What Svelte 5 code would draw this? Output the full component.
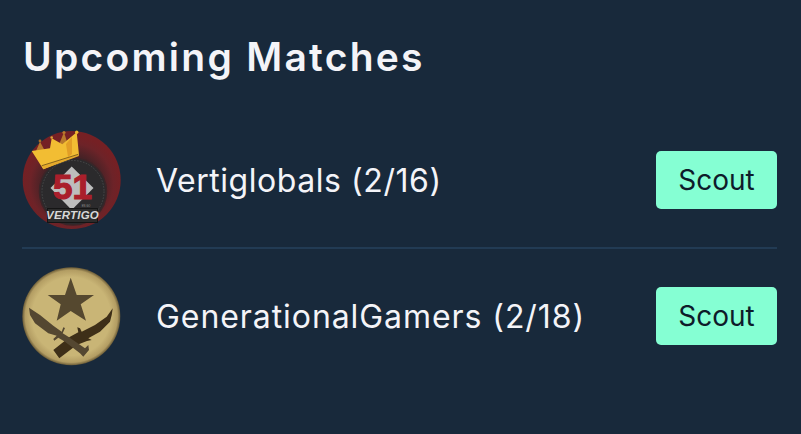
<script>
  const matches = [
    { name: 'Vertiglobals (2/16)', logo: 'vertigo', track: 0.55 },
    { name: 'GenerationalGamers (2/18)', logo: 'knives', track: 0.93 }
  ];
</script>

<main class="panel">
  <h1>Upcoming Matches</h1>
  <ul>
    {#each matches as m}
      <li>
        <div class="avatar">
          {#if m.logo === 'vertigo'}
            <svg viewBox="0 0 100 100" width="100" height="100">
              <defs>
                <radialGradient id="red" cx="50%" cy="55%" r="50%">
                  <stop offset="0.6" stop-color="#472226" />
                  <stop offset="0.85" stop-color="#6d2328" />
                  <stop offset="1" stop-color="#752024" />
                </radialGradient>
              </defs>
              <circle cx="49.700" cy="50" r="49" fill="url(#red)" />
              <circle cx="51" cy="61.500" r="33.500" fill="#2b2a2c" stroke="#3b2528" stroke-width="1.500" />
              <circle cx="51" cy="61.500" r="31" fill="none" stroke="#5a5a5a" stroke-width="0.6" stroke-dasharray="1.500 1.500" />
              <path d="M49.700 36.500 L71.500 58 L49.700 80 L28.500 58 Z" fill="#bdbdbd" />
              <text x="50.500" y="69" class="fifty">51</text>
              <text x="64" y="76.500" class="small">EN GO</text>
              <rect x="25.500" y="78.500" width="50" height="14" fill="#2c2c2c" stroke="#151515" stroke-width="1" />
              <text x="50.500" y="89.300" class="vertigo">VERTIGO</text>
              <path d="M14 21 L18 11.700 L23 21 Z" fill="#b9792c" />
              <path d="M36 17 L42 2.300 L46 15 Z" fill="#b9792c" />
              <path d="M9.700 21 L28 18.300 L29.700 8.300 L40.300 14.300 L54.700 2.300 L57 25 L21.300 39.300 Z" fill="#f2bd33" />
              <path d="M44 14 L50 7 L50 24 L46 27 Z" fill="#e29e26" />
              <path d="M19.700 35.700 L56.300 24.300 L57 26 L21.300 39.300 Z" fill="#e5aa2c" />
              <path d="M19.700 35.700 L56.300 24.300" stroke="#5a4114" stroke-width="0.7" fill="none" />
              <circle cx="18" cy="11" r="1.400" fill="#a96a2a" />
              <circle cx="29.700" cy="7.500" r="1.300" fill="#d9a33a" />
              <circle cx="42" cy="2.500" r="1.600" fill="#b9792c" />
              <circle cx="54.700" cy="2.300" r="1.700" fill="#efb72f" />
            </svg>
          {:else}
            <svg viewBox="0 0 100 100" width="100" height="100">
              <defs>
                <radialGradient id="gold" cx="50%" cy="50%" r="50%">
                  <stop offset="0.8" stop-color="#c9b576" />
                  <stop offset="0.94" stop-color="#b39d63" />
                  <stop offset="1" stop-color="#6a5b37" />
                </radialGradient>
              </defs>
              <circle cx="49.300" cy="50.300" r="49" fill="url(#gold)" />
              <path d="M48.700 11.700 L54.700 29 L72 29 L58.700 38.300 L64 54.700 L48.700 45 L34.700 54.700 L38.700 38.300 L25.700 29 L43 29 Z" fill="#55482f" />
              <path d="M90.700 42.300 Q90 50 88 55.700 L78 65.700 L66.300 72.300 L69.700 74 L65 75 L54.700 79 L37.300 92.300 L31.300 84 L48 70.700 L56.300 66.300 L55.300 61.300 L58 62.300 L59.700 65.700 L73 59 L84.700 50.700 Z" fill="#3e2f18" />
              <path d="M7 41.700 L18 49 L31.300 59.700 L39.700 65.700 L41.300 61.300 L43 62 L40.700 67.300 L46.300 70.700 L63 82.300 L66.300 79 L67 84 L61.300 90.700 L58 87.300 L43 75.700 L36.300 71.700 L32.300 74.700 L31.300 73 L34.700 69.700 L26.300 67.300 L13 57.300 L8 49 Z" fill="#544731" />
            </svg>
          {/if}
        </div>
        <span class="name" style="letter-spacing: {m.track}px">{m.name}</span>
        <button>Scout</button>
      </li>
    {/each}
  </ul>
</main>

<style>
  :global(body) {
    margin: 0;
    background: #18293b;
  }
  .panel {
    box-sizing: border-box;
    width: 801px;
    height: 434px;
    padding: 33px 24px 0 22px;
    background: #18293b;
    font-family: Inter, "Liberation Sans", sans-serif;
    overflow: hidden;
  }
  h1 {
    margin: 0 0 0 1px;
    font-size: 39px;
    line-height: 48px;
    font-weight: 600;
    letter-spacing: 2.250px;
    color: #f4f4f8;
  }
  ul {
    list-style: none;
    margin: 49px 0 0;
    padding: 0;
  }
  li {
    display: flex;
    align-items: center;
    height: 100px;
  }
  li:first-child {
    padding-bottom: 17px;
    border-bottom: 2px solid #223b54;
  }
  li + li {
    padding-top: 17px;
  }
  .avatar {
    width: 100px;
    height: 100px;
    flex: none;
    margin-right: 34px;
  }
  svg {
    display: block;
  }
  .name {
    flex: 1;
    font-size: 32px;
    color: #f4f4f8;
  }
  button {
    width: 121px;
    height: 58px;
    border: 0;
    border-radius: 5px;
    background: #85ffd3;
    color: #0e1b2a;
    font-family: inherit;
    font-size: 28px;
    font-weight: 400;
    padding: 0;
  }
  .fifty {
    font-family: "Liberation Sans", sans-serif;
    font-weight: 700;
    font-size: 35px;
    fill: #aa1f2b;
    stroke: #aa1f2b;
    stroke-width: 1.200px;
    text-anchor: middle;
  }
  .vertigo {
    font-family: "Liberation Sans", sans-serif;
    font-weight: 700;
    font-style: italic;
    font-size: 11.500px;
    letter-spacing: 0.200px;
    fill: #d8d8d8;
    text-anchor: middle;
  }
  .small {
    font-family: "Liberation Sans", sans-serif;
    font-size: 2.600px;
    fill: #9a9a9a;
    text-anchor: middle;
  }
</style>
